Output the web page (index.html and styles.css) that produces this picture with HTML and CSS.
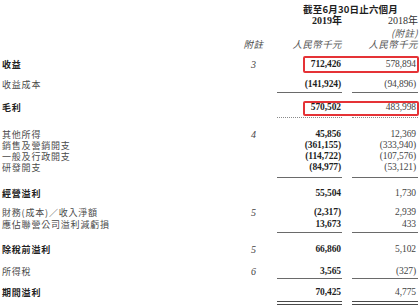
FILE: index.html
```html
<!DOCTYPE html>
<html lang="zh-Hant">
<head>
<meta charset="utf-8">
<link rel="stylesheet" href="styles.css">
</head>
<body>
<div class="report">
  <div class="row hrow">
    <span class="period">截至6月30日止六個月</span>
  </div>
  <div class="row hrow">
    <span></span><span></span>
    <span class="hnum b">2019年</span>
    <span class="hnum c18">2018年</span>
  </div>
  <div class="row hrow">
    <span></span><span></span><span></span>
    <span class="hcjk it c18">(附註)</span>
  </div>
  <div class="row units">
    <span></span>
    <span class="note hcjk it">附註</span>
    <span class="hcjk it right">人民幣千元</span>
    <span class="hcjk it right c18">人民幣千元</span>
  </div>

  <div class="row sp9 bold">
    <span class="label">收益</span>
    <span class="note">3</span>
    <span class="num">712,426</span>
    <span class="num c18 reg">578,894</span>
    <span class="hl"></span>
  </div>
  <div class="row sp9">
    <span class="label">收益成本</span>
    <span class="note"></span>
    <span class="num b line pb2">(141,924)</span>
    <span class="num c18 line pb2">(94,896)</span>
  </div>
  <div class="row sp9 bold">
    <span class="label">毛利</span>
    <span class="note"></span>
    <span class="num dots">570,502</span>
    <span class="num c18 reg dots">483,998</span>
    <span class="hl hl2"></span>
  </div>
  <div class="row sp11">
    <span class="label">其他所得</span>
    <span class="note">4</span>
    <span class="num b">45,856</span>
    <span class="num c18">12,369</span>
  </div>
  <div class="row">
    <span class="label">銷售及營銷開支</span>
    <span class="note"></span>
    <span class="num b">(361,155)</span>
    <span class="num c18">(333,940)</span>
  </div>
  <div class="row">
    <span class="label">一般及行政開支</span>
    <span class="note"></span>
    <span class="num b">(114,722)</span>
    <span class="num c18">(107,576)</span>
  </div>
  <div class="row">
    <span class="label">研發開支</span>
    <span class="note"></span>
    <span class="num b line pb4">(84,977)</span>
    <span class="num c18 line pb4">(53,121)</span>
  </div>
  <div class="row sp10 bold">
    <span class="label">經營溢利</span>
    <span class="note"></span>
    <span class="num">55,504</span>
    <span class="num c18 reg">1,730</span>
  </div>
  <div class="row sp8">
    <span class="label">財務(成本)／收入淨額</span>
    <span class="note">5</span>
    <span class="num b">(2,317)</span>
    <span class="num c18">2,939</span>
  </div>
  <div class="row tall">
    <span class="label">應佔聯營公司溢利減虧損</span>
    <span class="note"></span>
    <span class="num b line pb2">13,673</span>
    <span class="num c18 line pb2">433</span>
  </div>
  <div class="row sp11 bold">
    <span class="label">除稅前溢利</span>
    <span class="note">5</span>
    <span class="num">66,860</span>
    <span class="num c18 reg">5,102</span>
  </div>
  <div class="row sp11">
    <span class="label">所得稅</span>
    <span class="note">6</span>
    <span class="num b line pb1">3,565</span>
    <span class="num c18 line pb1">(327)</span>
  </div>
  <div class="row sp8 bold">
    <span class="label">期間溢利</span>
    <span class="note"></span>
    <span class="num dbl">70,425</span>
    <span class="num c18 reg dbl">4,775</span>
  </div>
</div>
</body>
</html>
```

FILE: styles.css
```css
html, body {
  margin: 0;
  padding: 0;
  background: #ffffff;
}

body {
  font-family: "Noto Sans CJK TC", "Noto Sans CJK SC", sans-serif;
  color: #3c3c3c;
}

.report {
  padding: 3px 2px 0 2px;
  width: 416px;
}

.row {
  display: grid;
  grid-template-columns: 228px 47px 65px 76px;
  align-items: start;
  position: relative;
  line-height: 11px;
}

.hrow {
  line-height: 12px;
}

.period {
  grid-column: 3 / 5;
  text-align: center;
  font-size: 9.5px;
  font-weight: 700;
  color: #1e1e1e;
  padding-left: 6px;
  letter-spacing: 0.2px;
}

.hnum {
  font-family: "Liberation Serif", "Noto Sans CJK TC", serif;
  font-size: 10px;
  text-align: right;
  color: #333;
}

.hnum.b {
  font-weight: 700;
  color: #1e1e1e;
}

.hcjk {
  font-size: 9.5px;
  color: #555;
  letter-spacing: 0.4px;
}

.right {
  text-align: right;
}

.it {
  font-style: italic;
}

.c18 {
  margin-left: 10px;
  text-align: right;
}

.label {
  font-size: 9px;
  letter-spacing: 0.8px;
  color: #4a4a4a;
  white-space: nowrap;
}

.bold .label {
  font-weight: 700;
  color: #222;
}

.note {
  font-family: "Liberation Serif", serif;
  font-style: italic;
  font-size: 10px;
  text-align: center;
  color: #444;
}

.units .note {
  font-family: "Noto Sans CJK TC", sans-serif;
  font-size: 9.5px;
}

.num {
  font-family: "Liberation Serif", serif;
  font-size: 9.5px;
  text-align: right;
  padding-right: 1px;
  color: #444;
  letter-spacing: -0.1px;
}

.num.c18 {
  padding-right: 2px;
}

.num.b,
.bold .num {
  font-weight: 700;
  color: #1f1f1f;
}

.bold .num.reg {
  font-weight: 400;
  color: #444;
}

.line {
  border-bottom: 1px solid #6a6a6a;
}

.pb1 { padding-bottom: 1px; }
.pb2 { padding-bottom: 2px; }
.pb4 { padding-bottom: 4px; }

.dots {
  padding-bottom: 4px;
  border-bottom: 1px dotted #8a8a8a;
}

.dbl {
  padding-bottom: 3px;
  border-bottom: 4px double #4a4a4a;
}

.sp8 { margin-top: 8px; }
.sp9 { margin-top: 9px; }
.sp10 { margin-top: 10px; }
.sp11 { margin-top: 11px; }
.tall { margin-top: 1px; }

.hl {
  position: absolute;
  left: 301px;
  right: -1px;
  top: -3px;
  height: 17px;
  box-sizing: border-box;
  border: 2px solid #e53236;
  border-radius: 2px;
  pointer-events: none;
}

.hl2 {
  top: -1px;
  height: 15px;
}
```
